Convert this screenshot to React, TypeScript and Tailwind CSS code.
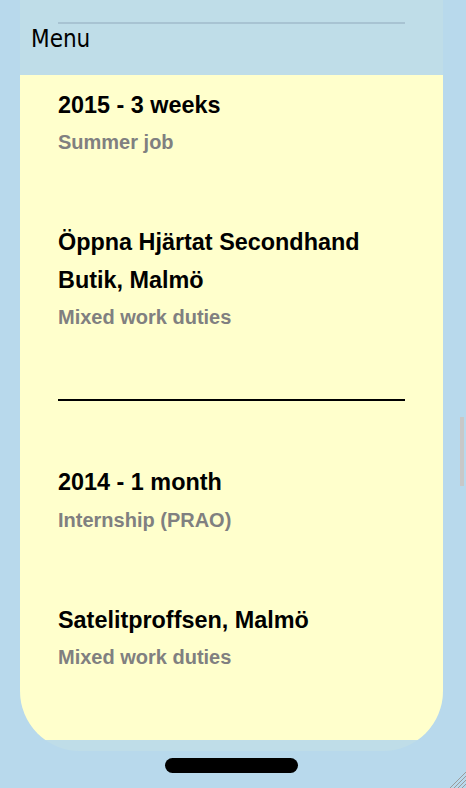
import React from 'react'

// job entries shown in the yellow card
const jobs = [
  { title: '2015 - 3 weeks', sub: 'Summer job' },
  { title: 'Öppna Hjärtat Secondhand Butik, Malmö', sub: 'Mixed work duties' },
  { title: '2014 - 1 month', sub: 'Internship (PRAO)' },
  { title: 'Satelitproffsen, Malmö', sub: 'Mixed work duties' },
]

function Job({ title, sub }: { title: string; sub: string }) {
  return (
    <div>
      <h3 className="text-[23.4px] leading-[37.4px] font-bold text-black">{title}</h3>
      <h4 className="text-[20px] leading-[37px] font-bold text-[#808080]">{sub}</h4>
    </div>
  )
}

export default function App() {
  return (
    <div className="relative h-[788px] w-full overflow-hidden bg-[#b8d9ec] font-['Liberation_Sans',Arial,sans-serif]">
      <div className="ml-[20px] w-[423px] h-[751px] rounded-b-[60px] overflow-hidden bg-[#bfdde8] flex flex-col">
        <header className="h-[75px] shrink-0 pt-[22px]">
          <div className="mx-[38px] h-[2px] bg-[#a8c3d2]" />
          <div className="pl-[11px] mt-[1px] text-[24px] leading-[28px] text-black font-['DejaVu_Sans_Condensed','DejaVu_Sans',sans-serif] [font-stretch:condensed]">
            Menu
          </div>
        </header>
        <main className="h-[665px] shrink-0 bg-[#ffffcc] px-[38px] pt-[12px] flex flex-col gap-[63px]">
          <Job {...jobs[0]} />
          <Job {...jobs[1]} />
          <div className="h-[2px] bg-black" />
          <Job {...jobs[2]} />
          <Job {...jobs[3]} />
        </main>
      </div>

      <div className="ml-[165px] mt-[7px] h-[15px] w-[133px] rounded-full bg-black" />

      {/* page scrollbar thumb */}
      <div className="absolute left-[460px] top-[417px] h-[69px] w-[4px] bg-[#c8c8c8]" />

      {/* resize grip */}
      <svg className="absolute right-0 bottom-0" width="18" height="18" viewBox="0 0 18 18">
        <g stroke="#9a9a9a" strokeWidth="1">
          <line x1="2" y1="18" x2="18" y2="2" />
          <line x1="6" y1="18" x2="18" y2="6" />
          <line x1="10" y1="18" x2="18" y2="10" />
          <line x1="14" y1="18" x2="18" y2="14" />
        </g>
      </svg>
    </div>
  )
}
